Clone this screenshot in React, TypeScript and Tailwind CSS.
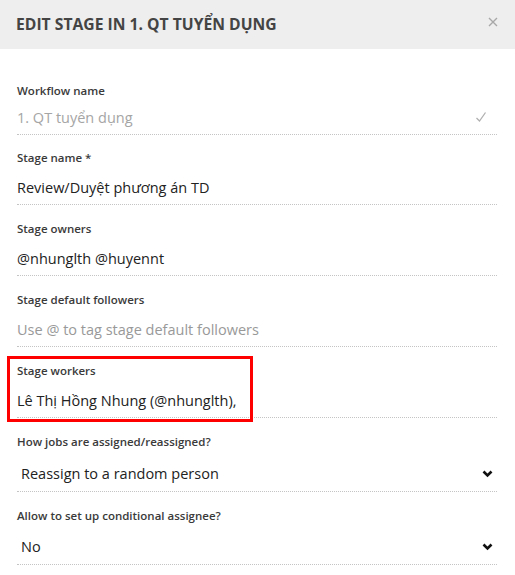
import React from "react";

const font = { fontFamily: '"Open Sans", "Noto Sans", sans-serif' };

function Label({ children }: { children: React.ReactNode }) {
  return <div className="h-5 flex items-center text-[11.5px] font-semibold text-[#3a3a3a]">{children}</div>;
}

function Chevron() {
  return (
    <svg width="11" height="8" viewBox="0 0 11 8" className="mr-[4px]">
      <path d="M1.5 1.5 L5.5 5.5 L9.5 1.5" fill="none" stroke="#111" strokeWidth="2.6" />
    </svg>
  );
}

export default function App() {
  return (
    <div className="w-[515px] h-[575px] bg-white overflow-hidden" style={font}>
      <div className="h-[49px] bg-[#eeeeee] flex items-center justify-between pl-4 pr-[17px]">
        <div className="text-[15.7px] font-bold text-[#444444]">EDIT STAGE IN 1. QT TUYỂN DỤNG</div>
        <svg width="10" height="10" viewBox="0 0 10 10" className="mb-[5px]">
          <path d="M1 1 L9 9 M9 1 L1 9" stroke="#a8a8a8" strokeWidth="1.4" />
        </svg>
      </div>
      <div className="pt-[32px] pl-[17px] pr-[18px] flex flex-col">
        {/* Workflow name */}
        <div className="mb-[13px]">
          <Label>Workflow name</Label>
          <div className="h-[34px] flex items-center justify-between border-b border-dotted border-[#c4c4c4] text-[14.5px] text-[#a5a5a5]">
            <span>1. QT tuyển dụng</span>
            <svg width="12" height="12" viewBox="0 0 12 12" className="mr-[10px] mt-[-2px]">
              <path d="M1.5 7 L4.5 10 L10.5 1.5" fill="none" stroke="#b0b0b0" strokeWidth="1.3" />
            </svg>
          </div>
        </div>
        {/* Stage name */}
        <div className="mb-[14px]">
          <Label>Stage name *</Label>
          <div className="h-[37px] pt-[3px] flex items-center border-b border-dotted border-[#c4c4c4] text-[14.5px] text-[#222222]">
            Review/Duyệt phương án TD
          </div>
        </div>
        <div className="mb-[14px]">
          <Label>Stage owners</Label>
          <div className="h-[37px] pt-[3px] flex items-center border-b border-dotted border-[#c4c4c4] text-[14.5px] text-[#222222]">
            @nhunglth @huyennt
          </div>
        </div>
        <div className="mb-[14px]">
          <Label>Stage default followers</Label>
          <div className="h-[37px] pt-[3px] flex items-center border-b border-dotted border-[#c4c4c4] text-[14.5px] text-[#999999]">
            Use @ to tag stage default followers
          </div>
        </div>
        <div className="mb-[14px] relative">
          <div className="absolute left-[-10px] top-[-5px] w-[246px] h-[66px] border-[3px] border-[#ff0000] pointer-events-none" />
          <Label>Stage workers</Label>
          <div className="h-[37px] pt-[3px] flex items-center border-b border-dotted border-[#c4c4c4] text-[14.5px] text-[#222222]">
            Lê Thị Hồng Nhung (@nhunglth),
          </div>
        </div>
        <div className="mb-[14px]">
          <Label>How jobs are assigned/reassigned?</Label>
          <div className="h-[40px] pt-[4px] pl-[4px] flex items-center justify-between border-b border-dotted border-[#c4c4c4] text-[14.5px] text-[#222222]">
            <span>Reassign to a random person</span>
            <Chevron />
          </div>
        </div>
        <div>
          <Label>Allow to set up conditional assignee?</Label>
          <div className="h-[39px] pt-[3px] pl-[4px] flex items-center justify-between border-b border-dotted border-[#c4c4c4] text-[14.5px] text-[#222222]">
            <span>No</span>
            <Chevron />
          </div>
        </div>
      </div>
    </div>
  );
}
